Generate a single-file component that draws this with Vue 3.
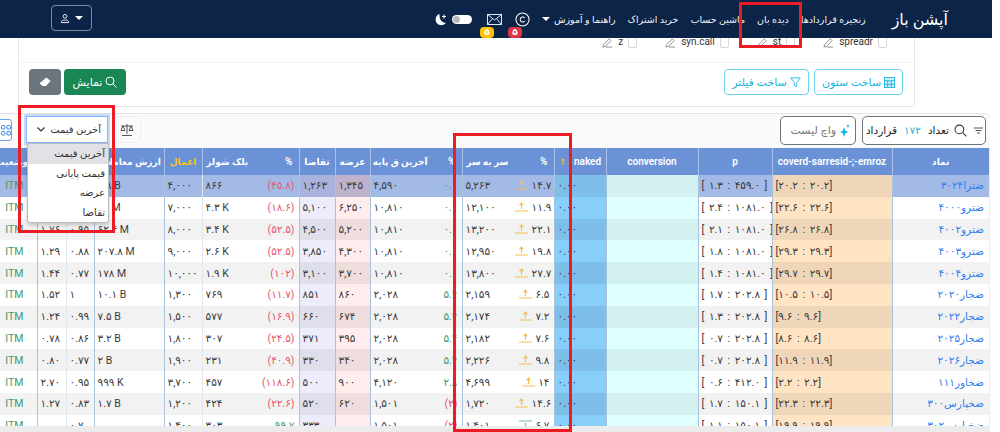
<script setup>
const links = ["زنجیره قراردادها", "دیده بان", "ماشین حساب", "خرید اشتراک"];
const checks = ["spreadr", "st", "syn.call", "z"];

// columns go from right to left, the table is rtl
const cols = [
  { label: "نماد", width: 97, cls: "c-name line" },
  { label: "coverd-sarresid-;-emroz", width: 120, cls: "c-covered line", th: "th-latin" },
  { label: "p", width: 74, cls: "c-p line", th: "th-latin" },
  { label: "conversion", width: 92, cls: "c-conv line", th: "th-latin" },
  { label: "naked", width: 52, cls: "c-naked line", th: "th-latin", sort: true },
  { label: "%", width: 42, cls: "c-up", th: "th-end" },
  { label: "سر به سر", width: 50, cls: "line" },
  { label: "%", width: 32, cls: "c-pct", th: "th-end" },
  { label: "آخرین ق پایه", width: 60, cls: "line" },
  { label: "عرضه", width: 35, cls: "c-ask line" },
  { label: "تقاضا", width: 36, cls: "c-bid line" },
  { label: "%", width: 47, cls: "c-pct", th: "th-end" },
  { label: "بلک شولز", width: 50, cls: "line-soft" },
  { label: "اعمال", width: 38, cls: "line", th: "th-gold" },
  { label: "ارزش معاملات", width: 70, cls: "line" },
  { label: "", width: 28, cls: "line-soft" },
  { label: "", width: 29, cls: "line" },
  { label: "وضعیت", width: 50, cls: "c-itm" },
];

const rows = [
  ["ضترا۳۰۲۴", "[۲۰.۲ : ۲۰.۲]", "[ ۱.۳ : ۴۵۹.۰ ]", "", "۰.۰۰", "۱۴.۷", "۵,۲۶۳", "۰.۱", "۴,۵۹۰", "۱,۳۴۵", "۱,۲۶۳", "(۴۵.۸)", "۸۶۶", "۴,۰۰۰", "۶.۸ B", "۰.۹۸", "۱.۴۰", "ITM"],
  ["ضترو۴۰۰۰", "[۲۲.۶ : ۲۲.۶]", "[ ۲.۴ : ۱۰۸۱.۰ ]", "", "۰.۰۰", "۱۱.۹", "۱۲,۱۰۰", "۰.۱", "۱۰,۸۱۰", "۶,۲۵۰", "۵,۱۰۰", "(۱۸.۶)", "۴.۳ K", "۷,۰۰۰", "۶۲ M", "۰.۹۰", "۱.۶۲", "ITM"],
  ["ضترو۴۰۰۲", "[۲۶.۸ : ۲۶.۸]", "[ ۲.۱ : ۱۰۸۱.۰ ]", "", "۰.۰۰", "۲۲.۱", "۱۳,۲۰۰", "۰.۱", "۱۰,۸۱۰", "۵,۲۰۰", "۴,۵۰۰", "(۵۲.۵)", "۳.۴ K", "۸,۰۰۰", "۶۲.۴ M", "۰.۹۵", "۱.۷۶", "ITM"],
  ["ضترو۴۰۰۳", "[۲۹.۳ : ۲۹.۳]", "[ ۱.۸ : ۱۰۸۱.۰ ]", "", "۰.۰۰", "۱۹.۸", "۱۲,۹۵۰", "۰.۱", "۱۰,۸۱۰", "۴,۳۰۰", "۳,۸۵۰", "(۵۲.۵)", "۲.۶ K", "۹,۰۰۰", "۲۰۷.۸ M", "۰.۸۸", "۱.۲۹", "ITM"],
  ["ضترو۴۰۰۴", "[۲۹.۷ : ۲۹.۷]", "[ ۱.۴ : ۱۰۸۱.۰ ]", "", "۰.۰۰", "۲۷.۷", "۱۳,۸۰۰", "۰.۱", "۱۰,۸۱۰", "۳,۷۰۰", "۳,۱۰۰", "(۱۰۲)", "۱.۹ K", "۱۰,۰۰۰", "۱۷۸ M", "۰.۷۷", "۱.۴۴", "ITM"],
  ["ضجار۲۰۲۰", "[۱۰.۵ : ۱۰.۵]", "[ ۱.۷ : ۲۰۲.۸ ]", "", "۰.۰۰", "۶.۵", "۲,۱۵۹", "۵.۴", "۲,۰۲۸", "۸۶۰", "۸۵۱", "(۱۱.۷)", "۷۶۹", "۱,۳۰۰", "۱۰.۱ B", "۱", "۱.۵۲", "ITM"],
  ["ضجار۲۰۲۲", "[۹.۶ : ۹.۶]", "[ ۱.۳ : ۲۰۲.۸ ]", "", "۰.۰۰", "۷.۲", "۲,۱۷۴", "۵.۴", "۲,۰۲۸", "۶۷۴", "۶۶۰", "(۱۶.۹)", "۵۷۷", "۱,۵۰۰", "۷.۵ B", "۰.۹۹", "۱.۲۴", "ITM"],
  ["ضجار۲۰۲۵", "[۸.۶ : ۸.۶]", "[ ۰.۷ : ۲۰۲.۸ ]", "", "۰.۰۰", "۷.۶", "۲,۱۸۲", "۵.۴", "۲,۰۲۸", "۳۹۵", "۳۷۱", "(۲۴.۵)", "۳۰۷", "۱,۸۰۰", "۳.۲ B", "۰.۸۶", "۰.۷۸", "ITM"],
  ["ضجار۲۰۲۶", "[۱۱.۹ : ۱۱.۹]", "[ ۰.۷ : ۲۰۲.۸ ]", "", "۰.۰۰", "۹.۸", "۲,۲۲۶", "۵.۴", "۲,۰۲۸", "۳۴۰", "۳۳۰", "(۴۰.۹)", "۲۳۱", "۱,۹۰۰", "۲ B", "۰.۷۷", "۰.۸۰", "ITM"],
  ["ضخاور۱۱۱", "[۲.۲ : ۲.۲]", "[ ۰.۶ : ۴۱۲.۰ ]", "", "۰.۰۰", "۱۴", "۴,۶۹۹", "۲.۸", "۴,۱۲۰", "۹۰۰", "۵۰۰", "(۱۱۸.۶)", "۴۵۷", "۳,۷۰۰", "۹۹۹ K", "۰.۹۵", "۲.۷۰", "ITM"],
  ["ضخپارس۳۰۰", "[۲۲.۳ : ۲۲.۳]", "[ ۱.۷ : ۱۵۰.۱ ]", "", "۰.۰۰", "۱۴.۶", "۱,۷۲۰", "(۲)", "۱,۵۰۱", "۶۲۰", "۵۲۰", "(۲۲.۶)", "۴۲۴", "۱,۲۰۰", "۱.۷ B", "۰.۸۳", "۱.۲۷", "ITM"],
  ["ضخپارس۳۰۲", "[۱۹.۹ : ۱۹.۹]", "[ ۱.۱ : ۱۵۰.۱ ]", "", "۰.۰۰", "۶.۷", "۱,۴۰۱", "(۲)", "۱,۵۰۱", "", "۳۳۳", "۹۹.۷", "۳۰۳", "۱,۴۰۰", "", "۰.۷", "", "ITM"],
];

const isNegative = (val) => val.startsWith("(");
</script>

<template>
  <div class="page">
    <nav class="navbar">
      <span class="brand">آپشن باز</span>
      <a v-for="link in links" :key="link" class="nav-link">{{ link }}</a>
      <a class="nav-link nav-drop">راهنما و آموزش <i class="caret"></i></a>
      <span class="nav-icon copy">
        <svg width="15" height="15" viewBox="0 0 16 16" fill="none" stroke="#fff" stroke-width="1.1">
          <circle cx="8" cy="8" r="7" />
          <path d="M10.300 6.200a2.700 2.700 0 1 0 0 3.600" />
        </svg>
        <b class="badge red">۵</b>
      </span>
      <span class="nav-icon mail">
        <svg width="15" height="11" viewBox="0 0 15 11" fill="none" stroke="#dfe8f5" stroke-width="1">
          <rect x="0.500" y="0.500" width="14" height="10" />
          <path d="M0.500 0.500 7.500 6l7-5.500M0.500 10.500 5.500 4.500M14.500 10.500 9.500 4.500" />
        </svg>
        <b class="badge yellow">۵</b>
      </span>
      <span class="toggle"><i></i></span>
      <svg class="moon" width="12" height="13" viewBox="0 0 12 13" fill="#fff">
        <path d="M4.600 1C2.200 1.800.6 3.900.6 6.500c0 3.200 2.500 5.700 5.700 5.700 1.900 0 3.600-.9 4.700-2.400-3.800.5-7.300-3.900-6.400-8.800z" />
        <path d="M8.500 1.500h1v1.500H11v1H9.500v1.500h-1V4H7V3h1.500z" />
      </svg>
      <button class="user-btn">
        <svg width="10" height="11" viewBox="0 0 16 16" fill="none" stroke="#fff" stroke-width="1.400">
          <circle cx="8" cy="4.500" r="3" />
          <path d="M2 14.500c0-3 2.500-4 6-4s6 1 6 4z" />
        </svg>
        <i class="caret"></i>
      </button>
    </nav>

    <section class="filter-card">
      <div class="check-row">
        <label v-for="name in checks" :key="name" class="check-item">
          <i class="check-box"></i>
          <span>{{ name }}</span>
          <svg width="11" height="11" viewBox="0 0 12 12" fill="none" stroke="#8a8a8a" stroke-width="1">
            <path d="M1 11 2 8l6-6 2 2-6 6zM4 11h7" />
          </svg>
        </label>
      </div>
      <div class="action-row">
        <button class="outline-btn make-col">
          <svg width="11" height="11" viewBox="0 0 12 12" fill="#cdeefa" stroke="#25b6e0" stroke-width="1">
            <rect x="0.500" y="0.500" width="11" height="11" />
            <path d="M0.500 4h11M0.500 8h11M4 4v7.500M8 4v7.500" />
          </svg>
          ساخت ستون
        </button>
        <button class="outline-btn make-filter">
          <svg width="11" height="11" viewBox="0 0 12 12" fill="none" stroke="#25b6e0" stroke-width="1">
            <path d="M0.800 1h10.400L7.300 6v4.500l-2.600-1V6z" />
          </svg>
          ساخت فیلتر
        </button>
        <button class="show-btn">
          <svg width="12" height="12" viewBox="0 0 12 12" fill="none" stroke="#fff" stroke-width="1">
            <circle cx="5" cy="5" r="4" />
            <path d="m8 8 3.500 3.500" />
          </svg>
          نمایش
        </button>
        <button class="erase-btn">
          <svg width="12" height="11" viewBox="0 0 12 11" fill="#fff">
            <path d="M7.500 0.500 11.500 4 7 9H3.500L0.500 6.200z" />
          </svg>
        </button>
      </div>
    </section>

    <section class="table-card">
      <div class="toolbar">
        <div class="count-box">
          <svg class="icon-filter" width="9" height="7" viewBox="0 0 9 7" stroke="#555" stroke-width="1">
            <path d="M0 1h9M1.500 3.500h6M3 6h3" />
          </svg>
          <svg class="icon-search" width="13" height="13" viewBox="0 0 12 12" fill="none" stroke="#333" stroke-width="1">
            <circle cx="5" cy="5" r="4" />
            <path d="m8 8 3.500 3.500" />
          </svg>
          <span>تعداد</span>
          <span class="count-num">۱۷۲</span>
          <span>قرارداد</span>
        </div>
        <div class="watch-box">
          <svg width="10" height="13" viewBox="0 0 10 13" fill="#16b5e0">
            <path d="M4 3 5.300 6.700 9 8 5.300 9.300 4 13 2.700 9.300 0 8 2.700 6.700zM8 0l.6 1.400L10 2l-1.400.6L8 4l-.6-1.400L6 2l1.400-.6z" />
          </svg>
          <span>واچ لیست</span>
        </div>
        <div class="left-tools">
          <div class="scale-box">
            <svg width="14" height="13" viewBox="0 0 14 13" fill="none" stroke="#555" stroke-width="1">
              <path d="M7 1v10M2 12.500h10M1 3h12M3 3 1 7.500h4zM11 3 9 7.500h4z" />
            </svg>
          </div>
          <div class="fake-select">
            <span>آخرین قیمت</span>
            <svg width="8" height="5" viewBox="0 0 8 5" fill="none" stroke="#333" stroke-width="1.200">
              <path d="m0.500 0.500 3.500 3.500 3.500-3.500" />
            </svg>
            <ul class="select-menu">
              <li class="active">آخرین قیمت</li>
              <li>قیمت پایانی</li>
              <li>عرضه</li>
              <li>تقاضا</li>
            </ul>
          </div>
          <div class="grid-box">
            <svg width="10" height="11" viewBox="0 0 10 11" fill="none" stroke="#2f80ed" stroke-width="1">
              <rect x="0.500" y="0.500" width="3.500" height="3.500" rx="1" />
              <rect x="6" y="0.500" width="3.500" height="3.500" rx="1" />
              <rect x="0.500" y="6.500" width="3.500" height="3.500" rx="1" />
              <rect x="6" y="6.500" width="3.500" height="3.500" rx="1" />
            </svg>
          </div>
        </div>
      </div>

      <div class="table-wrap">
        <table class="grid">
          <colgroup>
            <col v-for="(col, i) in cols" :key="i" :style="{ width: col.width + 'px' }" />
          </colgroup>
          <thead>
            <tr>
              <th v-for="(col, i) in cols" :key="i" :class="[col.th, col.cls.includes('line') ? 'th-line' : '']">
                {{ col.label }}<span v-if="col.sort" class="sort">↓↑</span>
              </th>
            </tr>
          </thead>
          <tbody>
            <tr v-for="(row, r) in rows" :key="r" :class="{ picked: r === 0 }">
              <td v-for="(val, i) in row" :key="i" :class="cols[i].cls">
                <template v-if="i === 5">
                  <svg width="13" height="10" viewBox="0 0 13 10" fill="none" :stroke="r === 11 ? '#6cbf9a' : '#f2c14e'" stroke-width="1.200">
                    <path v-if="r === 11" d="M0 1h13M6.500 9V3M4.500 6l2 2.500 2-2.500" />
                    <path v-else d="M0 9h13M6.500 7V1M4.500 3.500l2-2.500 2 2.500" />
                  </svg>
                  {{ val }}
                </template>
                <span v-else-if="cols[i].cls === 'c-pct'" :class="isNegative(val) ? 'neg' : 'pos'">{{ val }}</span>
                <template v-else>{{ val }}</template>
              </td>
            </tr>
          </tbody>
        </table>
      </div>
    </section>

    <!-- red marks drawn over the screenshot -->
    <i class="mark mark-a"></i>
    <i class="mark mark-b"></i>
    <i class="mark mark-c"></i>
  </div>
</template>

<style>
body {
  background: #fff;
}
</style>

<style scoped>
.page {
  position: relative;
  width: 992px;
  height: 432px;
  overflow: hidden;
  font-family: Roboto, "DejaVu Sans", sans-serif;
  font-size: 11px;
  color: #333;
  direction: rtl;
  background: #fff;
}

.navbar {
  display: flex;
  align-items: center;
  height: 38px;
  padding-right: 44px;
  background: #0b2447;
  color: #fff;
}
.brand {
  font-size: 16px;
  margin-left: 26px;
}
.nav-link {
  font-size: 9.500px;
  margin-left: 12px;
  white-space: nowrap;
  color: #f1f4f8;
}
.nav-drop {
  display: flex;
  align-items: center;
  gap: 4px;
}
.caret {
  width: 0;
  height: 0;
  border-left: 4px solid transparent;
  border-right: 4px solid transparent;
  border-top: 4px solid #fff;
}
.nav-icon {
  position: relative;
  display: flex;
}
.mail {
  margin-right: 13px;
}
.badge {
  position: absolute;
  width: 14px;
  height: 11px;
  border-radius: 4px;
  font-size: 9px;
  line-height: 11px;
  text-align: center;
  color: #fff;
}
.red {
  top: 15px;
  left: -7px;
  background: #dc3545;
}
.yellow {
  top: 13px;
  left: -7px;
  background: #ffc107;
}
.toggle {
  display: flex;
  align-items: center;
  justify-content: flex-end;
  width: 20px;
  height: 9px;
  margin-right: 15px;
  padding: 0 1px;
  box-sizing: border-box;
  background: #fff;
  border-radius: 5px;
}
.toggle i {
  width: 7px;
  height: 7px;
  border-radius: 50%;
  background: #bbb;
}
.moon {
  margin-right: 5px;
}
.user-btn {
  display: flex;
  direction: ltr;
  align-items: center;
  justify-content: center;
  gap: 5px;
  width: 41px;
  height: 26px;
  margin: 0 auto 2px 51px;
  padding: 0;
  background: transparent;
  border: 1px solid #7d8ba1;
  border-radius: 4px;
}

.filter-card {
  width: 897px;
  height: 69px;
  margin-right: 77px;
  box-sizing: border-box;
  border-right: 1px solid #e6e6e6;
  border-left: 1px solid #e6e6e6;
  border-bottom: 1px solid #e4e4e4;
  border-radius: 0 0 5px 5px;
}
.check-row {
  display: flex;
  align-items: flex-end;
  gap: 28px;
  height: 25px;
  padding: 0 27px 14px 0;
  box-sizing: border-box;
  border-bottom: 1px solid #f3f3f3;
  overflow: hidden;
  font-size: 10px;
}
.check-item {
  display: flex;
  align-items: center;
  gap: 5px;
  flex: none;
  line-height: 10px;
}
.check-box {
  width: 9px;
  height: 12px;
  box-sizing: border-box;
  border: 1px solid #d6d6d6;
  border-radius: 2px;
  flex: none;
}
.action-row {
  display: flex;
  align-items: center;
  padding: 6px 11px 0 0;
}
.action-row button {
  display: flex;
  align-items: center;
  justify-content: center;
  gap: 3px;
  height: 26px;
  padding: 0;
  border-radius: 4px;
  font-family: inherit;
  font-size: 11px;
}
.outline-btn {
  background: #fff;
  border: 1px solid #6fd4ee;
  color: #22b3dc;
}
.make-col {
  width: 89px;
}
.make-filter {
  width: 85px;
  margin-right: 5px;
}
.show-btn {
  width: 62px;
  margin-right: auto;
  background: #198754;
  border: 0;
  color: #fff;
}
.erase-btn {
  width: 32px;
  margin: 0 3px 0 10px;
  background: #6c757d;
  border: 0;
}

.table-card {
  height: 319px;
  width: 990px;
  margin: 6px 2px 0 0;
  background: #ececec;
  border-top: 1px solid #e4e4e4;
  border-radius: 0 5px 0 0;
  box-sizing: border-box;
  overflow: hidden;
}
.toolbar {
  display: flex;
  align-items: flex-start;
  height: 34px;
  padding: 2px 4px 0 0;
  box-sizing: border-box;
  background: #fafafa;
}
.count-box,
.watch-box {
  display: flex;
  align-items: center;
  height: 29px;
  box-sizing: border-box;
  border: 1px solid #6c757d;
  border-radius: 5px;
  background: #fff;
  white-space: nowrap;
}
.count-box {
  width: 124px;
  padding-right: 2px;
  font-size: 10.500px;
  color: #222;
}
.icon-search {
  margin: 0 7px 0 5px;
}
.count-num {
  margin: 0 7px;
  color: #16b5e0;
}
.watch-box {
  width: 76px;
  margin-right: 6px;
  padding: 0 5px;
  gap: 4px;
  color: #777;
}
.left-tools {
  display: flex;
  align-items: flex-start;
  margin-right: auto;
}
.scale-box {
  display: flex;
  align-items: center;
  justify-content: center;
  width: 29px;
  height: 27px;
  box-sizing: border-box;
  margin-left: 4px;
  border: 1px solid #eceef2;
  border-radius: 5px;
}
.fake-select {
  position: relative;
  display: flex;
  align-items: center;
  justify-content: space-between;
  width: 82px;
  height: 27px;
  padding: 0 6px 0 10px;
  box-sizing: border-box;
  margin-left: 14px;
  background: #fff;
  border: 1px solid #86b7fe;
  box-shadow: 0 0 0 2px #c5dcfd;
  font-size: 10px;
  color: #333;
  z-index: 3;
}
.select-menu {
  position: absolute;
  top: 26px;
  left: 0;
  width: 80px;
  margin: 0;
  padding: 0;
  list-style: none;
  background: #fff;
  border: 1px solid #bbb;
  border-radius: 0 0 3px 3px;
  box-shadow: 0 2px 4px rgba(0, 0, 0, 0.2);
}
.select-menu li {
  height: 19.500px;
  padding-right: 3px;
  line-height: 19.500px;
}
.select-menu .active {
  background: #e3e1e5;
}
.grid-box {
  display: flex;
  align-items: center;
  justify-content: flex-start;
  flex: none;
  width: 24px;
  height: 22px;
  margin: 3px 0 0 -12px;
  padding-left: 12px;
  box-sizing: border-box;
  background: #fff;
  border: 1px solid #6aa5f0;
  border-radius: 3px;
}

.table-wrap {
  width: 989px;
  height: 278px;
  margin-right: 1px;
  overflow: hidden;
}
.grid {
  width: 1002px;
  table-layout: fixed;
  border-collapse: collapse;
  background: #fff;
}
.grid th {
  height: 27px;
  padding: 0 2px;
  background: #6b92d6;
  color: #fff;
  font-size: 9px;
  font-weight: 600;
  white-space: nowrap;
  overflow: hidden;
  text-align: center;
}
.grid th.th-latin {
  font-size: 10px;
}
.grid th.th-line {
  border-left: 1px solid #a9bfe6;
}
.grid th.th-end {
  text-align: right;
  padding-right: 6px;
  font-size: 10px;
}
.grid th.th-gold {
  color: #f5c518;
}
.sort {
  color: #e9b949;
  font-size: 9px;
}
.grid td {
  height: 21.800px;
  padding: 0 3px;
  box-sizing: border-box;
  direction: ltr;
  text-align: left;
  white-space: nowrap;
  overflow: hidden;
  font-size: 10.500px;
  color: #3a3a3a;
}
.grid tbody tr:nth-child(odd) td {
  background-color: #f2f2f2;
}
.grid tbody tr.picked td {
  background-color: #a3bae6;
}
.grid td.line {
  border-left: 1px solid #a8c4dc;
}
.grid td.line-soft {
  border-left: 1px solid #dfe6ee;
}
.grid td.c-name {
  direction: rtl;
  text-align: right;
  padding-right: 5px;
  color: #2f80ed;
}
.grid td.c-covered,
.grid td.c-p {
  word-spacing: 2px;
}
.grid td.c-covered {
  background-color: #ffe4c4;
}
.grid tbody tr:nth-child(odd) td.c-covered {
  background-color: #f0d6b8;
}
.grid td.c-conv {
  background-color: #e0ffff;
}
.grid tbody tr:nth-child(odd) td.c-conv {
  background-color: #d3f1f1;
}
.grid td.c-naked {
  background-color: #87cefa;
}
.grid tbody tr:nth-child(odd) td.c-naked {
  background-color: #7dbfe8;
}
.grid td.c-ask {
  background-color: #ffecec;
}
.grid tbody tr:nth-child(odd) td.c-ask {
  background-color: #efdddd;
}
.grid tbody tr.picked td.c-ask {
  background-color: #bfb2cd;
}
.grid td.c-bid {
  background-color: #ececfb;
}
.grid tbody tr:nth-child(odd) td.c-bid {
  background-color: #dfdfeb;
}
.grid tbody tr.picked td.c-bid {
  background-color: #a9b2dc;
}
.grid td.c-up,
.grid td.c-pct {
  text-align: right;
  padding-right: 4px;
}
.grid td.c-up svg {
  vertical-align: -1px;
  margin-right: 1px;
}
.grid td.c-itm {
  text-align: right;
  padding-right: 13px;
  color: #3d9970;
}
.neg {
  color: #e8556d;
}
.pos {
  color: #3d9970;
}

.mark {
  position: absolute;
  box-sizing: border-box;
  border: 3px solid #ed1c24;
  z-index: 5;
}
.mark-a {
  left: 18px;
  top: 105px;
  width: 97px;
  height: 128px;
}
.mark-b {
  left: 453px;
  top: 133px;
  width: 119px;
  height: 299px;
}
.mark-c {
  left: 739px;
  top: 2px;
  width: 63px;
  height: 46px;
}
</style>
